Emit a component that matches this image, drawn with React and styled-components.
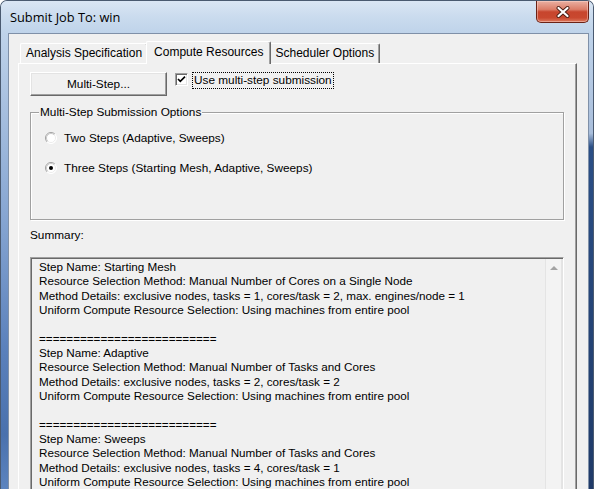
import React from "react";
import styled, { createGlobalStyle } from "styled-components";

const GlobalStyle = createGlobalStyle`
  html, body {
    margin: 0;
    padding: 0;
    background: #ffffff;
  }
  body {
    font-family: "Liberation Sans", Arial, sans-serif;
    font-size: 11.8px;
    color: #000;
  }
`;

const Window = styled.div`
  box-sizing: border-box;
  width: 594px;
  height: 489px;
  overflow: hidden;
  display: flex;
  flex-direction: column;
  border: 1px solid #4a5a70;
  border-bottom: none;
  border-radius: 7px 7px 0 0;
  background-color: #c9d9ec;
`;

const TitleBar = styled.div`
  height: 32px;
  flex: none;
  display: flex;
  align-items: flex-start;
  justify-content: space-between;
  padding: 0 4px 0 9px;
  background-image: linear-gradient(180deg, #dae6f4 0%, #cadbee 50%, #bfd3ea 100%);
`;

const Title = styled.div`
  font-family: "Open Sans", "Liberation Sans", sans-serif;
  font-size: 12.8px;
  line-height: 16px;
  margin-top: 8px;
  color: #000;
`;

const CloseButton = styled.div`
  box-sizing: border-box;
  width: 53px;
  height: 22px;
  display: flex;
  align-items: center;
  justify-content: center;
  border: 1px solid #6b2216;
  border-top: none;
  border-radius: 0 0 5px 5px;
  background-image: linear-gradient(180deg, #eab0a2 0%, #dc7d68 40%, #c7452d 52%, #c9482f 80%, #dd7a5f 100%);
  box-shadow: inset 0 0 0 1px rgba(255, 220, 210, 0.45);
`;

const Body = styled.div`
  flex: 1;
  min-height: 0;
  display: flex;
`;

const Frame = styled.div`
  flex: none;
  width: ${(p) => p.$w}px;
  background-color: ${(p) => (p.$side === "left" ? "#6a8ec4" : "#2a4a7c")};
  background-image: ${(p) =>
    p.$side === "left"
      ? "linear-gradient(180deg, #bfd3ea 0%, #a9c1e0 15%, #87a6d2 40%, #5a80bb 70%, #4a71ad 88%, #5c84bf 100%)"
      : "linear-gradient(180deg, #bfd3ea 0%, #a9bedb 22%, #2b4f86 25%, #1f3a68 100%)"};
`;

const Client = styled.div`
  flex: 1;
  min-width: 0;
  display: flex;
  flex-direction: column;
  background: #f0f0f0;
  border: 1px solid #7f90a8;
  border-bottom: none;
  padding: 7px 11px 0 9px;
`;

const TabStrip = styled.div`
  display: flex;
  align-items: flex-end;
  height: 22px;
  padding-left: 2px;
  position: relative;
  z-index: 1;
  font-size: 12px;
`;

const Tab = styled.div`
  box-sizing: border-box;
  height: ${(p) => (p.$active ? "23px" : "20px")};
  line-height: ${(p) => (p.$active ? "20px" : "19px")};
  margin: ${(p) => (p.$active ? "0 -2px -1px" : "0")};
  padding: ${(p) => (p.$active ? "0 7px" : "0 5px")};
  position: relative;
  z-index: ${(p) => (p.$active ? 2 : 1)};
  white-space: nowrap;
  background: #f0f0f0;
  border-top: 1px solid #ffffff;
  border-left: 1px solid #ffffff;
  border-right: 1px solid #696969;
  border-radius: 2px 2px 0 0;
  box-shadow: inset -1px 0 0 #a0a0a0;
`;

const TabPanel = styled.div`
  flex: none;
  display: flex;
  flex-direction: column;
  background: #f0f0f0;
  border-top: 1px solid #ffffff;
  border-left: 1px solid #ffffff;
  border-right: 1px solid #696969;
  box-shadow: inset -1px 0 0 #a0a0a0;
  padding: 8px 12px 0 11px;
`;

const TopRow = styled.div`
  display: flex;
  align-items: flex-start;
  gap: 8px;
`;

const PushButton = styled.div`
  box-sizing: border-box;
  width: 137px;
  height: 24px;
  display: flex;
  align-items: center;
  justify-content: center;
  background: #f0f0f0;
  border: 1px solid;
  border-color: #ffffff #696969 #696969 #ffffff;
  box-shadow: inset -1px -1px 0 #a0a0a0, inset 1px 1px 0 #e3e3e3;
`;

const CheckRow = styled.div`
  display: flex;
  align-items: center;
  gap: 4px;
  height: 17px;
`;

const CheckBox = styled.div`
  box-sizing: border-box;
  width: 13px;
  height: 13px;
  margin-top: -2px;
  background: #ffffff;
  border: 1px solid;
  border-color: #a0a0a0 #ffffff #ffffff #a0a0a0;
  box-shadow: inset 1px 1px 0 #696969, inset -1px -1px 0 #e3e3e3;
  display: flex;
  align-items: center;
  justify-content: center;
`;

const FocusLabel = styled.div`
  box-sizing: border-box;
  height: 17px;
  line-height: 15px;
  padding: 0 1px;
  border: 1px dotted #000;
  white-space: nowrap;
`;

const GroupBox = styled.div`
  position: relative;
  box-sizing: border-box;
  height: 108px;
  margin-top: 16px;
  border: 1px solid #a0a0a0;
  box-shadow: inset 1px 1px 0 #ffffff, 1px 1px 0 #ffffff;
  padding: 17px 0 0 14px;
  display: flex;
  flex-direction: column;
  gap: 14px;
`;

const GroupLegend = styled.div`
  position: absolute;
  top: -8px;
  left: 8px;
  padding: 0 1px;
  line-height: 14px;
  background: #f0f0f0;
  white-space: nowrap;
`;

const RadioRow = styled.div`
  display: flex;
  align-items: center;
  gap: 7px;
  height: 16px;
  white-space: nowrap;
`;

const FieldLabel = styled.div`
  margin-top: 8px;
  line-height: 14px;
`;

const SummaryBox = styled.div`
  box-sizing: border-box;
  height: 260px;
  margin-top: 15px;
  display: flex;
  background: #f0f0f0;
  border: 1px solid;
  border-color: #a0a0a0 #ffffff #ffffff #a0a0a0;
  box-shadow: inset 1px 1px 0 #696969, inset -1px -1px 0 #e3e3e3;
  padding: 1px;
`;

const SummaryText = styled.div`
  flex: 1;
  padding: 1px 0 0 7px;
  font-size: 11.7px;
  line-height: 14.35px;
`;

const SummaryLine = styled.div`
  height: 14.35px;
  white-space: pre;
`;

const ScrollTrack = styled.div`
  box-sizing: border-box;
  width: 17px;
  flex: none;
  background: #f3f3f3;
  border-left: 1px solid #e4e4e4;
  border-right: 1px solid #e4e4e4;
  display: flex;
  justify-content: center;
  padding-top: 7px;
`;

const UpArrow = styled.div`
  width: 0;
  height: 0;
  border-left: 4px solid transparent;
  border-right: 4px solid transparent;
  border-bottom: 4px solid #a3a3a3;
`;

const CheckMark = () => (
  <svg width="9" height="9" viewBox="0 0 9 9">
    <path d="M1 4 L3.3 6.4 L8 1.6" fill="none" stroke="#000" strokeWidth="1.6" />
  </svg>
);

const Radio = ({ checked }) => (
  <svg width="12" height="12" viewBox="0 0 12 12">
    <circle cx="6" cy="6" r="5.5" fill="#ffffff" />
    <path d="M2.1 9.9 A5.5 5.5 0 0 1 9.9 2.1" fill="none" stroke="#a0a0a0" strokeWidth="1" />
    <path d="M9.9 2.1 A5.5 5.5 0 0 1 2.1 9.9" fill="none" stroke="#ffffff" strokeWidth="1" />
    <path d="M2.8 9.2 A4.5 4.5 0 0 1 9.2 2.8" fill="none" stroke="#c8c8c8" strokeWidth="1" />
    <path d="M9.2 2.8 A4.5 4.5 0 0 1 2.8 9.2" fill="none" stroke="#ececec" strokeWidth="1" />
    {checked && <circle cx="6" cy="6" r="2" fill="#000" />}
  </svg>
);

const CloseGlyph = () => (
  <svg width="16" height="12" viewBox="0 0 16 12">
    <path d="M3.5 2 L12.5 10 M12.5 2 L3.5 10" stroke="#4a1d14" strokeWidth="4" strokeLinecap="round" />
    <path d="M3.5 2 L12.5 10 M12.5 2 L3.5 10" stroke="#ffffff" strokeWidth="2.2" strokeLinecap="round" />
  </svg>
);

const rule = "==========================";

const summary = [
  "Step Name: Starting Mesh",
  "Resource Selection Method: Manual Number of Cores on a Single Node",
  "Method Details: exclusive nodes, tasks = 1, cores/task = 2, max. engines/node = 1",
  "Uniform Compute Resource Selection: Using machines from entire pool",
  "",
  rule,
  "Step Name: Adaptive",
  "Resource Selection Method: Manual Number of Tasks and Cores",
  "Method Details: exclusive nodes, tasks = 2, cores/task = 2",
  "Uniform Compute Resource Selection: Using machines from entire pool",
  "",
  rule,
  "Step Name: Sweeps",
  "Resource Selection Method: Manual Number of Tasks and Cores",
  "Method Details: exclusive nodes, tasks = 4, cores/task = 1",
  "Uniform Compute Resource Selection: Using machines from entire pool",
];

const tabs = ["Analysis Specification", "Compute Resources", "Scheduler Options"];

const App = () => {
  return (
    <>
      <GlobalStyle />
      <Window>
        <TitleBar>
          <Title>Submit Job To: win</Title>
          <CloseButton>
            <CloseGlyph />
          </CloseButton>
        </TitleBar>
        <Body>
          <Frame $side="left" $w={7} />
          <Client>
            <TabStrip>
              {tabs.map((t) => (
                <Tab key={t} $active={t === "Compute Resources"}>
                  {t}
                </Tab>
              ))}
            </TabStrip>
            <TabPanel>
              <TopRow>
                <PushButton>Multi-Step...</PushButton>
                <CheckRow>
                  <CheckBox>
                    <CheckMark />
                  </CheckBox>
                  <FocusLabel>Use multi-step submission</FocusLabel>
                </CheckRow>
              </TopRow>
              <GroupBox>
                <GroupLegend>Multi-Step Submission Options</GroupLegend>
                <RadioRow>
                  <Radio />
                  Two Steps (Adaptive, Sweeps)
                </RadioRow>
                <RadioRow>
                  <Radio checked />
                  Three Steps (Starting Mesh, Adaptive, Sweeps)
                </RadioRow>
              </GroupBox>
              <FieldLabel>Summary:</FieldLabel>
              <SummaryBox>
                <SummaryText>
                  {summary.map((line, i) => (
                    <SummaryLine key={i}>{line}</SummaryLine>
                  ))}
                </SummaryText>
                <ScrollTrack>
                  <UpArrow />
                </ScrollTrack>
              </SummaryBox>
            </TabPanel>
          </Client>
          <Frame $side="right" $w={4} />
        </Body>
      </Window>
    </>
  );
};

export default App;
